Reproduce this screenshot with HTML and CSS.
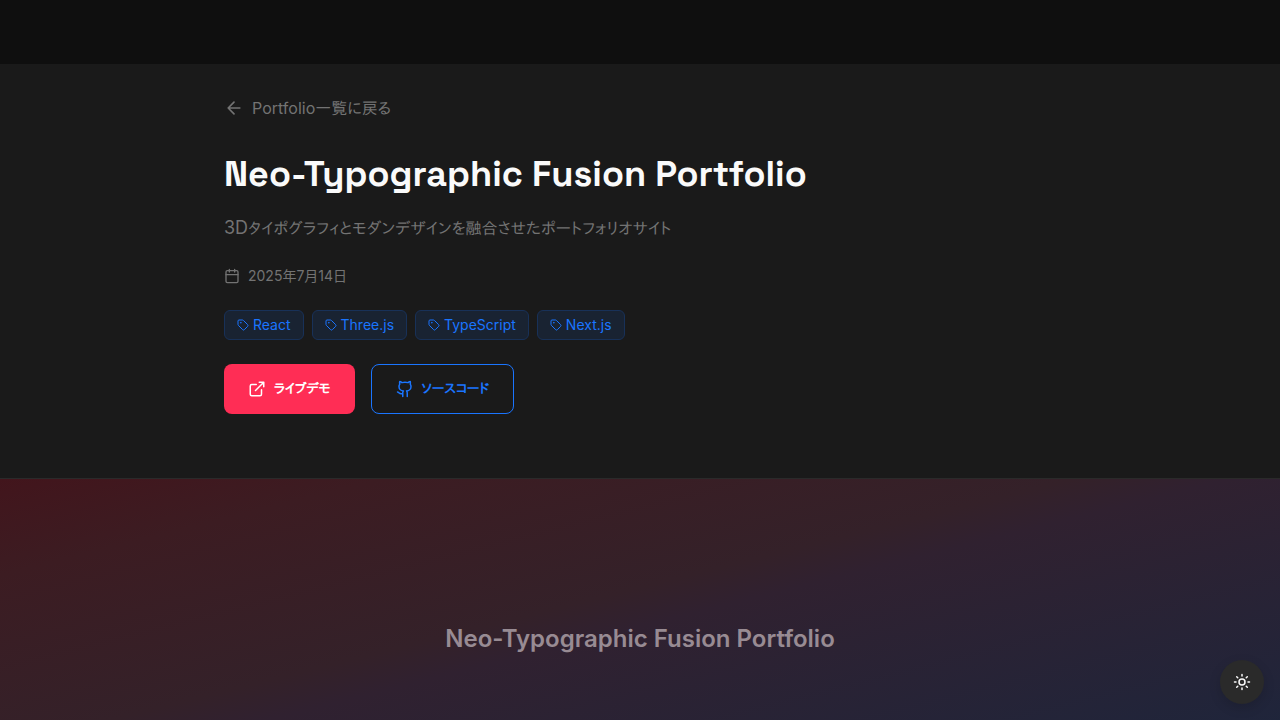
FILE: index.html
```html
<!DOCTYPE html>
<html lang="ja">
<head>
<meta charset="utf-8">
<meta name="viewport" content="width=device-width, initial-scale=1">
<title>Neo-Typographic Fusion Portfolio</title>
<link rel="stylesheet" href="styles.css">
</head>
<body>
<svg class="sprite" aria-hidden="true">
  <symbol id="tag" viewBox="0 0 24 24"><path d="M12.586 2.586A2 2 0 0 0 11.172 2H4a2 2 0 0 0-2 2v7.172a2 2 0 0 0 .586 1.414l8.704 8.704a2.426 2.426 0 0 0 3.42 0l6.58-6.58a2.426 2.426 0 0 0 0-3.42z"/><circle cx="7.5" cy="7.5" r=".5" fill="currentColor"/></symbol>
</svg>
<main class="page">
  <header class="intro">
    <div class="container">
      <a class="back" href="#"><svg class="icon icon-lg" viewBox="0 0 24 24"><path d="m12 19-7-7 7-7M19 12H5"/></svg><span>Portfolio<span class="back-ja">一覧に戻る</span></span></a>
      <h1 class="title">Neo-Typographic Fusion Portfolio</h1>
      <p class="lead">3D<span class="lead-ja">タイポグラフィとモダンデザインを融合させたポートフォリオサイト</span></p>
      <div class="date"><svg class="icon icon-md" viewBox="0 0 24 24"><path d="M8 2v4M16 2v4M3 10h18"/><rect x="3" y="4" width="18" height="18" rx="2"/></svg><time datetime="2025-07-14">2025年7月14日</time></div>
      <ul class="tags">
        <li class="tag"><svg class="icon icon-sm"><use href="#tag"/></svg>React</li>
        <li class="tag"><svg class="icon icon-sm"><use href="#tag"/></svg>Three.js</li>
        <li class="tag"><svg class="icon icon-sm"><use href="#tag"/></svg>TypeScript</li>
        <li class="tag"><svg class="icon icon-sm"><use href="#tag"/></svg>Next.js</li>
      </ul>
      <div class="actions">
        <a class="button button-primary" href="#"><svg class="icon icon-btn" viewBox="0 0 24 24"><path d="M15 3h6v6M10 14 21 3M18 13v6a2 2 0 0 1-2 2H5a2 2 0 0 1-2-2V8a2 2 0 0 1 2-2h6"/></svg><span>ライブデモ</span></a>
        <a class="button button-outline" href="#"><svg class="icon icon-btn" viewBox="0 0 24 24"><path d="M15 22v-4a4.800 4.800 0 0 0-1-3.500c3 0 6-2 6-5.500.08-1.250-.27-2.480-1-3.500.28-1.150.28-2.350 0-3.500 0 0-1 0-3 1.500-2.640-.5-5.360-.5-8 0C6 2 5 2 5 2c-.3 1.150-.3 2.350 0 3.500A5.403 5.403 0 0 0 4 9c0 3.500 3 5.500 6 5.500-.39.490-.68 1.050-.85 1.650S8.930 17.380 9 18v4M9 18c-4.510 2-5-2-7-2"/></svg><span>ソースコード</span></a>
      </div>
    </div>
  </header>
  <section class="cover"><p class="cover-title">Neo-Typographic Fusion Portfolio</p></section>
</main>
<button class="theme" type="button" aria-label="Toggle theme"><svg class="icon icon-btn" viewBox="0 0 24 24"><circle cx="12" cy="12" r="4"/><path d="M12 2v2M12 20v2M4.930 4.930l1.410 1.410M17.660 17.660l1.410 1.410M2 12h2M20 12h2M6.340 17.660l-1.410 1.410M19.070 4.930l-1.410 1.410"/></svg></button>
</body>
</html>
```
FILE: styles.css
```css
* { box-sizing: border-box; margin: 0; padding: 0; }
body {
  background: #0f0f0f;
  color: #fafafa;
  font: 16px/24px Inter, "Noto Sans CJK JP", sans-serif;
  font-feature-settings: "palt";
}
a { color: inherit; text-decoration: none; }
.sprite { display: none; }
.page { padding-top: 64px; }
.intro { background: #1a1a1a; border-bottom: 1px solid #2a2a2a; padding: 32px 0 64px; }
.container { max-width: 896px; margin: 0 auto; padding: 0 32px; }
.icon { flex: none; fill: none; stroke: currentColor; stroke-width: 2; stroke-linecap: round; stroke-linejoin: round; }
.icon-sm { width: 12px; height: 12px; }
.icon-md { width: 16px; height: 16px; }
.icon-btn { width: 18px; height: 18px; }
.icon-lg { width: 20px; height: 20px; }
.back { display: inline-flex; align-items: center; gap: 8px; color: #737373; margin-bottom: 32px; }
.back-ja, .lead-ja { font-family: IPAPGothic, "Noto Sans CJK JP", sans-serif; font-size: 16px; line-height: 1; }
.title { font-family: "Space Grotesk", Inter, sans-serif; font-size: 36px; line-height: 44px; font-weight: 700; margin-bottom: 18px; }
.lead { font-size: 18px; line-height: 28px; color: #737373; margin-bottom: 24px; }
.date { display: flex; align-items: center; gap: 8px; font-size: 14px; line-height: 20px; color: #737373; margin-bottom: 24px; }
.tags { display: flex; flex-wrap: wrap; gap: 8px; list-style: none; margin-bottom: 24px; }
.tag { display: flex; align-items: center; gap: 4px; padding: 4px 12px; border: 1px solid #183158; border-radius: 6px; background: #192332; color: #1a75ff; font-size: 14px; line-height: 20px; }
.actions { display: flex; flex-wrap: wrap; gap: 16px; }
.button { display: flex; align-items: center; gap: 8px; min-height: 50px; padding: 12px 24px; border-radius: 8px; font-family: IPAPGothic, "Noto Sans CJK JP", sans-serif; font-size: 13px; font-weight: 700; }
.button-primary { background: #ff2d55; color: #fff; }
.button-outline { border: 1px solid #1a75ff; color: #1a75ff; }
.cover { display: flex; align-items: center; justify-content: center; min-height: 320px; background: linear-gradient(to bottom right, #42151c, #3c1c22 15%, #342129 42%, #302130 48%, #1a263e); }
.cover-title { font-size: 24px; line-height: 32px; font-weight: 600; color: #988b93; }
.theme { position: fixed; right: 16px; bottom: 16px; display: grid; place-items: center; width: 44px; height: 44px; border: 0; border-radius: 50%; background: #2a2a2a; color: #fafafa; box-shadow: 0 4px 12px rgba(0, 0, 0, .15); }
```
